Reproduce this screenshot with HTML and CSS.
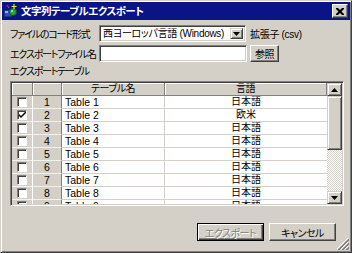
FILE: index.html
```
<!DOCTYPE html>
<html lang="ja">
<head>
    <meta charset="UTF-8">
    <title>文字列テーブルエクスポート</title>
    <link rel="stylesheet" href="styles.css">
</head>
<body>

<div class="window">
    <div class="titlebar">
        <svg class="app-icon" width="16" height="16" viewBox="0 0 16 16">
            <rect x="1" y="7" width="8" height="7" fill="#2a4fb8" stroke="#0c1f66"/>
            <rect x="2" y="8" width="3" height="2" fill="#8fb0ff"/>
            <circle cx="10" cy="9" r="3.5" fill="#27a83a" stroke="#0d5c18"/>
            <circle cx="9" cy="8" r="1" fill="#b8f0b0"/>
            <path d="M11 1v5M8.5 3.5h5" stroke="#f4e04a" stroke-width="1.2"/>
            <path d="M4 2l2 3" stroke="#e03030" stroke-width="1.2"/>
        </svg>
        <span class="title">文字列テーブルエクスポート</span>
        <span class="close-btn">
            <svg width="8" height="7" viewBox="0 0 8 7">
                <path d="M0 0h2l2 2 2-2h2v1l-2.5 2.5 2.5 2.5v1h-2l-2-2-2 2h-2v-1l2.5-2.5-2.5-2.5z" fill="#000"/>
            </svg>
        </span>
    </div>

    <div class="content">
        <div class="form-row">
            <span class="field-label">ファイルのコード形式</span>
            <div class="select">
                <span class="select-text">西ヨーロッパ言語 (Windows)</span>
                <span class="drop-btn">
                    <svg width="7" height="4" viewBox="0 0 7 4"><path d="M0 0h7l-3.5 4z" fill="#000"/></svg>
                </span>
            </div>
            <span class="ext">拡張子 (csv)</span>
        </div>
        <div class="form-row">
            <span class="field-label">エクスポートファイル名</span>
            <div class="textbox"></div>
            <button class="btn btn-browse">参照</button>
        </div>

        <div class="section-label">エクスポートテーブル</div>

        <div class="grid">
            <div class="grid-body">
                <div class="grid-row grid-head">
                    <div class="hcell"></div>
                    <div class="hcell"></div>
                    <div class="hcell">テーブル名</div>
                    <div class="hcell">言語</div>
                </div>
                <div class="grid-row">
                    <div class="cell-fixed"><span class="check"></span></div>
                    <div class="cell-fixed cell-num">1</div>
                    <div class="cell cell-name">Table 1</div>
                    <div class="cell cell-lang">日本語</div>
                </div>
                <div class="grid-row">
                    <div class="cell-fixed"><span class="check checked">
                        <svg width="7" height="7" viewBox="0 0 7 7"><path d="M0 2l2 2 5-5v2l-5 5-2-2z" fill="#000"/></svg>
                    </span></div>
                    <div class="cell-fixed cell-num">2</div>
                    <div class="cell cell-name">Table 2</div>
                    <div class="cell cell-lang">欧米</div>
                </div>
                <div class="grid-row">
                    <div class="cell-fixed"><span class="check"></span></div>
                    <div class="cell-fixed cell-num">3</div>
                    <div class="cell cell-name">Table 3</div>
                    <div class="cell cell-lang">日本語</div>
                </div>
                <div class="grid-row">
                    <div class="cell-fixed"><span class="check"></span></div>
                    <div class="cell-fixed cell-num">4</div>
                    <div class="cell cell-name">Table 4</div>
                    <div class="cell cell-lang">日本語</div>
                </div>
                <div class="grid-row">
                    <div class="cell-fixed"><span class="check"></span></div>
                    <div class="cell-fixed cell-num">5</div>
                    <div class="cell cell-name">Table 5</div>
                    <div class="cell cell-lang">日本語</div>
                </div>
                <div class="grid-row">
                    <div class="cell-fixed"><span class="check"></span></div>
                    <div class="cell-fixed cell-num">6</div>
                    <div class="cell cell-name">Table 6</div>
                    <div class="cell cell-lang">日本語</div>
                </div>
                <div class="grid-row">
                    <div class="cell-fixed"><span class="check"></span></div>
                    <div class="cell-fixed cell-num">7</div>
                    <div class="cell cell-name">Table 7</div>
                    <div class="cell cell-lang">日本語</div>
                </div>
                <div class="grid-row">
                    <div class="cell-fixed"><span class="check"></span></div>
                    <div class="cell-fixed cell-num">8</div>
                    <div class="cell cell-name">Table 8</div>
                    <div class="cell cell-lang">日本語</div>
                </div>
                <div class="grid-row">
                    <div class="cell-fixed"><span class="check"></span></div>
                    <div class="cell-fixed cell-num">9</div>
                    <div class="cell cell-name">Table 9</div>
                    <div class="cell cell-lang">日本語</div>
                </div>
            </div>
            <div class="vscroll">
                <span class="sb-btn">
                    <svg width="7" height="4" viewBox="0 0 7 4"><path d="M3.5 0l3.5 4h-7z" fill="#000"/></svg>
                </span>
                <span class="sb-thumb"></span>
                <span class="sb-track"></span>
                <span class="sb-btn">
                    <svg width="7" height="4" viewBox="0 0 7 4"><path d="M0 0h7l-3.5 4z" fill="#000"/></svg>
                </span>
            </div>
        </div>

        <div class="footer">
            <button class="btn btn-default" disabled>エクスポート</button>
            <button class="btn">キャンセル</button>
        </div>
    </div>

    <svg class="grip" width="12" height="12" viewBox="0 0 12 12">
        <path d="M11 0L0 11M11 4L4 11M11 8L8 11" stroke="#fff" stroke-width="1"/>
        <path d="M12 1L1 12M12 2L2 12M12 5L5 12M12 6L6 12M12 9L9 12M12 10L10 12" stroke="#808080" stroke-width="1"/>
    </svg>
</div>

</body>
</html>
```

FILE: styles.css
```
body {
    margin: 0;
    background-color: #d4d0c8;
    font-family: "Liberation Sans", "Noto Sans CJK JP", sans-serif;
    font-size: 10px;
    font-feature-settings: "palt";
    color: #000;
}
.window {
    position: relative;
    width: 352px;
    height: 253px;
    box-sizing: border-box;
    padding: 1px;
    background-color: #d4d0c8;
    border: 1px solid;
    border-color: #d4d0c8 #404040 #404040 #d4d0c8;
    box-shadow: inset 1px 1px #fff, inset -1px -1px #808080;
}
.titlebar {
    display: flex;
    align-items: center;
    height: 18px;
    padding: 0 2px 0 1px;
    background-color: #0a1486;
    color: #fff;
}
.app-icon {
    flex: none;
    margin-right: 2px;
}
.title {
    flex: 1;
    font-weight: bold;
    font-size: 10.5px;
    letter-spacing: -0.5px;
    line-height: 18px;
    white-space: nowrap;
}
.close-btn {
    display: flex;
    align-items: center;
    justify-content: center;
    width: 14px;
    height: 12px;
    background-color: #d4d0c8;
    border: 1px solid;
    border-color: #fff #404040 #404040 #fff;
    box-shadow: inset -1px -1px #808080;
}
.content {
    padding: 5px 14px 0 8px;
}
.form-row {
    display: flex;
    align-items: center;
    height: 17px;
    margin-bottom: 3px;
}
.field-label {
    flex: none;
    width: 89px;
    letter-spacing: -1.2px;
    white-space: nowrap;
}
.select,
.textbox {
    flex: none;
    box-sizing: border-box;
    height: 17px;
    background-color: #fff;
    border: 1px solid;
    border-color: #808080 #fff #fff #808080;
    box-shadow: inset 1px 1px #404040, inset -1px -1px #d4d0c8;
}
.select {
    display: flex;
    align-items: center;
    width: 147px;
    padding: 2px;
}
.select-text {
    flex: 1;
    padding-left: 1px;
    line-height: 13px;
    letter-spacing: -0.3px;
    white-space: nowrap;
    overflow: hidden;
}
.drop-btn {
    display: flex;
    align-items: center;
    justify-content: center;
    box-sizing: border-box;
    width: 13px;
    height: 11px;
    background-color: #d4d0c8;
    border: 1px solid;
    border-color: #d4d0c8 #404040 #404040 #d4d0c8;
    box-shadow: inset 1px 1px #fff, inset -1px -1px #808080;
}
.ext {
    margin-left: 4px;
    letter-spacing: -0.3px;
    white-space: nowrap;
}
.textbox {
    width: 148px;
}
.btn {
    box-sizing: border-box;
    height: 18px;
    padding: 0;
    font-family: inherit;
    font-size: 10px;
    font-feature-settings: "palt";
    letter-spacing: -0.5px;
    color: #000;
    background-color: #d4d0c8;
    border: 1px solid;
    border-color: #fff #404040 #404040 #fff;
    box-shadow: inset -1px -1px #808080;
}
.btn-browse {
    width: 29px;
    height: 17px;
    margin-left: 3px;
}
.section-label {
    height: 14px;
    line-height: 14px;
    margin-top: 2px;
    letter-spacing: -1.2px;
}
.grid {
    display: flex;
    box-sizing: border-box;
    width: 334px;
    height: 125px;
    margin-top: 2px;
    background-color: #d4d0c8;
    border: 1px solid;
    border-color: #808080 #fff #fff #808080;
    box-shadow: inset 1px 1px #404040, inset -1px -1px #d4d0c8;
    padding: 1px;
}
.grid-body {
    flex: 1;
    overflow: hidden;
}
.grid-row {
    display: grid;
    grid-template-columns: 21px 29px 103px 1fr;
    height: 13px;
}
.hcell {
    box-sizing: border-box;
    height: 13px;
    line-height: 12px;
    text-align: center;
    letter-spacing: -0.5px;
    border-right: 1px solid #808080;
    border-bottom: 1px solid #808080;
    box-shadow: inset 1px 1px #fff;
    white-space: nowrap;
}
.cell-fixed {
    display: flex;
    align-items: center;
    justify-content: center;
    box-sizing: border-box;
    border-right: 1px solid #fff;
    border-bottom: 1px solid #f2f1ec;
}
.cell-num {
    border-right-color: #808080;
    font-size: 10.5px;
    line-height: 12px;
}
.cell {
    box-sizing: border-box;
    background-color: #fff;
    border-bottom: 1px solid #d4d0c8;
    line-height: 12px;
    white-space: nowrap;
    overflow: hidden;
}
.cell-name {
    padding-left: 3px;
    font-size: 10.5px;
    border-right: 1px solid #d4d0c8;
}
.cell-lang {
    text-align: center;
}
.check {
    display: flex;
    align-items: center;
    justify-content: center;
    box-sizing: border-box;
    width: 10px;
    height: 10px;
    background-color: #fff;
    border: 1px solid;
    border-color: #808080 #fff #fff #808080;
    box-shadow: inset 1px 1px #404040;
}
.vscroll {
    display: flex;
    flex-direction: column;
    width: 15px;
}
.sb-btn,
.sb-thumb {
    display: flex;
    align-items: center;
    justify-content: center;
    box-sizing: border-box;
    background-color: #d4d0c8;
    border: 1px solid;
    border-color: #d4d0c8 #404040 #404040 #d4d0c8;
    box-shadow: inset 1px 1px #fff, inset -1px -1px #808080;
}
.sb-btn {
    height: 13px;
}
.sb-thumb {
    height: 54px;
}
.sb-track {
    flex: 1;
    background: repeating-conic-gradient(#d4d0c8 0 25%, #fff 0 50%) 0 0 / 2px 2px;
}
.footer {
    display: flex;
    justify-content: flex-end;
    gap: 5px;
    margin-top: 17px;
}
.footer .btn {
    width: 67px;
}
.btn-default {
    border: 1px solid #000;
    box-shadow: inset 1px 1px #fff, inset -1px -1px #404040, inset -2px -2px #808080;
}
.btn:disabled {
    color: #808080;
    text-shadow: 1px 1px #fff;
}
.grip {
    position: absolute;
    right: 2px;
    bottom: 2px;
}
```
